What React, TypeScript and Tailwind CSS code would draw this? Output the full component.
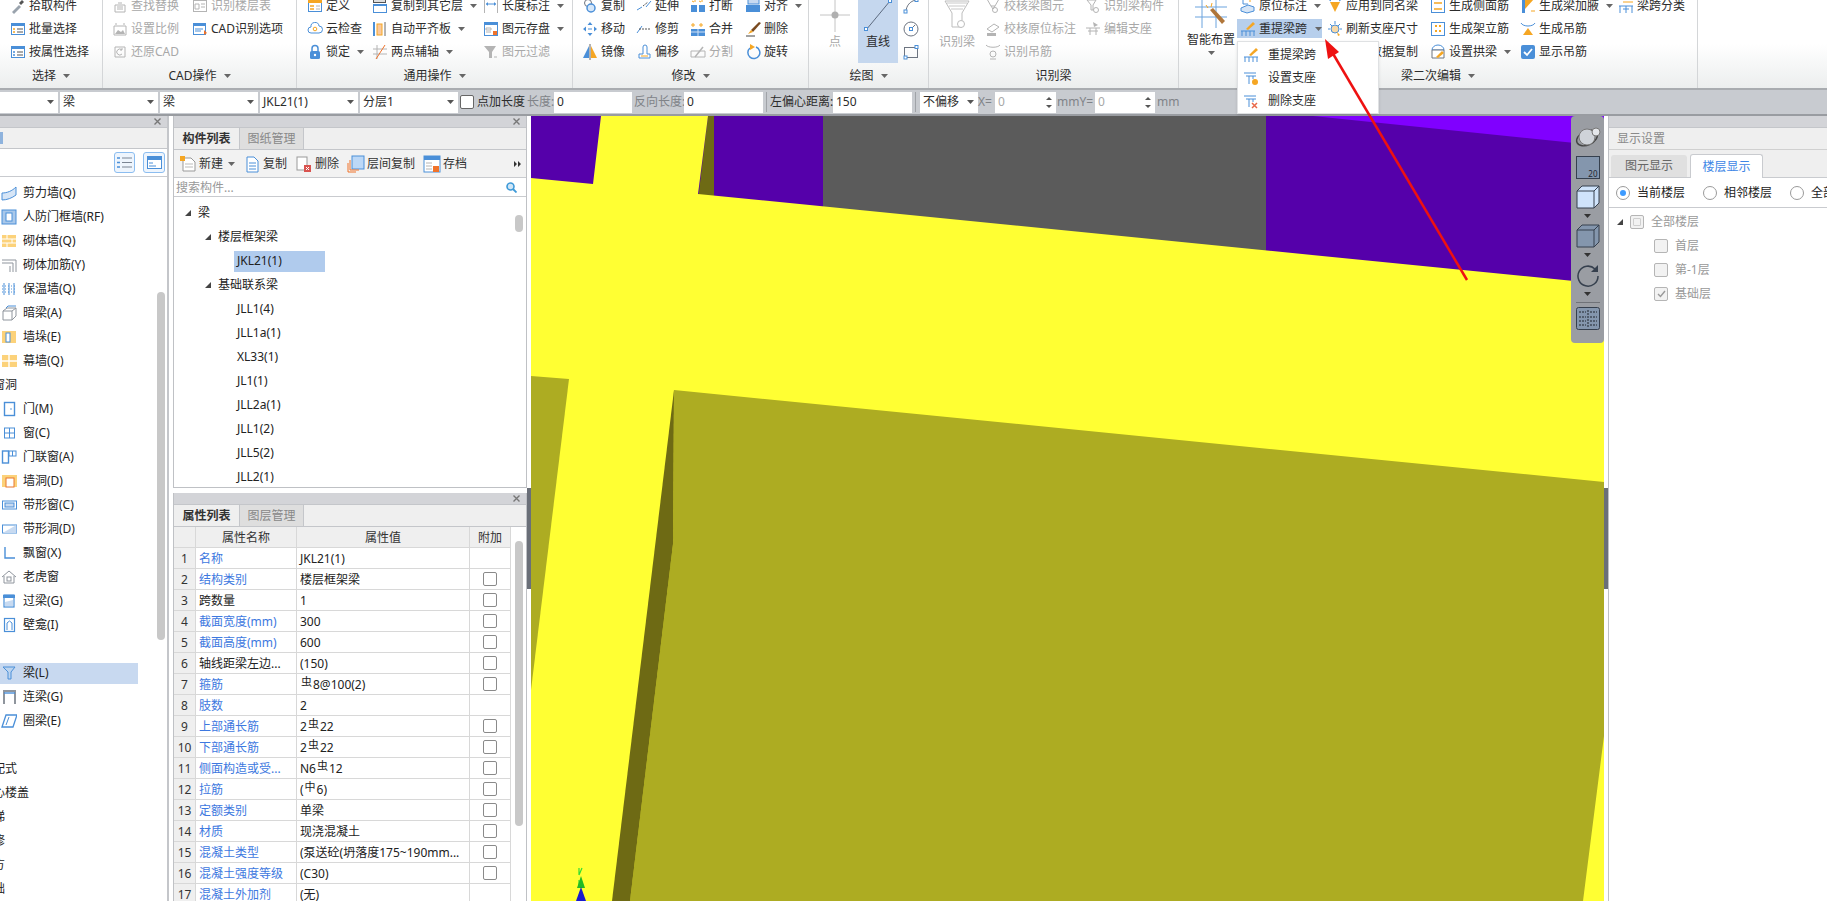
import React from "react";

const B = "#4a8fd8";
const O = "#f5a623";
const G = "#b4b4b4";
const D = "#6d7480";

const Ic = ({ children, w = 16, h = 16 }: { children: React.ReactNode; w?: number; h?: number }) => (
  <svg width={w} height={h} viewBox={`0 0 ${w} ${h}`} fill="none" className="shrink-0">
    {children}
  </svg>
);

const Caret = ({ c = "#666" }: { c?: string }) => (
  <svg width="7" height="4" viewBox="0 0 7 4" className="shrink-0">
    <path d="M0 0h7L3.5 4z" fill={c} />
  </svg>
);

// ribbon icons
const icons: Record<string, React.ReactNode> = {
  pick: <><path d="M2 14l7-7 2 2-7 7z" fill="#9aa3ad" /><path d="M9 5l3-3 2 2-3 3z" fill="#555" /></>,
  batch: <><rect x="1.5" y="2.5" width="13" height="11" stroke={B} fill="#fff" /><rect x="1" y="2" width="14" height="3" fill={B} /><path d="M3 8h2M3 11h2" stroke={O} strokeWidth="1.4" /><path d="M7 8h6M7 11h6" stroke="#555" /></>,
  attr: <><rect x="1.5" y="2.5" width="13" height="11" stroke={B} fill="#fff" /><rect x="1" y="2" width="14" height="3" fill={B} /><path d="M3 8h2M3 11h2" stroke={B} strokeWidth="1.4" /><path d="M7 8h6M7 11h6" stroke="#555" /></>,
  find: <><path d="M3 14V7h10v7zM5 9h6M5 11h6M6 5h4" stroke={G} /></>,
  scale: <><path d="M2 14V5h12v9z" stroke={G} /><path d="M3 13l3-4 3 2 2-2 2 4z" fill={G} /><path d="M4 2v2M12 2v2" stroke={G} /></>,
  restore: <><path d="M3 3h10v10H3z" stroke={G} /><path d="M10 6a3 3 0 1 0 0 4M10 4v2H8" stroke={G} /></>,
  table: <><rect x="1.5" y="2.5" width="13" height="11" stroke={G} /><path d="M3 6h4v5H3zM9 6h4M9 9h4" stroke={G} /></>,
  cad: <><rect x="1.5" y="2.5" width="12" height="11" stroke={B} fill="#fff" /><rect x="1" y="2" width="13" height="3" fill={B} /><path d="M3 8h8M3 10h6" stroke={B} /><path d="M12 9l3 3-3 2z" fill="#f0732a" /></>,
  define: <><rect x="1.5" y="2.5" width="13" height="11" stroke={B} fill="#fff" /><rect x="1" y="2" width="14" height="3" fill={O} /><path d="M3 8h4M3 11h4" stroke={O} strokeWidth="1.5" /><path d="M9 8h4M9 11h4" stroke={G} /></>,
  cloud: <><path d="M4 12a3 3 0 0 1 0-6 4 4 0 0 1 8-1 3.5 3.5 0 0 1 0 7z" stroke={B} fill="#fff" /><circle cx="8" cy="8" r="1.8" stroke={O} /></>,
  lock: <><rect x="3" y="7" width="10" height="8" rx="1.5" fill={B} /><path d="M5 7V4.5a3 3 0 0 1 6 0V7" stroke={B} strokeWidth="1.5" /><circle cx="8" cy="11" r="1.2" fill="#fff" /></>,
  copyL: <><rect x="1.5" y="1.5" width="12" height="3" stroke="#555" fill="#ddd" /><rect x="1.5" y="6.5" width="13" height="8" stroke={B} fill="#fff" /><rect x="1" y="6" width="14" height="2" fill={B} /></>,
  slab: <><path d="M2 1v14" stroke={B} strokeWidth="2" /><rect x="5" y="3" width="5" height="11" fill="#f9c9a0" stroke={O} /><path d="M13 1v14" stroke={G} strokeWidth="2" /></>,
  axis: <><path d="M1 5h14M1 10h14" stroke={G} /><path d="M5 1v14" stroke={G} /><path d="M4 15L13 1" stroke="#f0732a" /></>,
  dim: <><path d="M1.5 1v14M14.5 1v14" stroke={G} /><path d="M3 6h10" stroke={B} /><path d="M3 6l2-2v4zM13 6l-2-2v4z" fill={B} /></>,
  saveEl: <><rect x="1.5" y="1.5" width="13" height="13" stroke={B} fill="#fff" /><rect x="1" y="1" width="14" height="3" fill={B} /><path d="M3 7h5v2H3zM3 11h5" stroke={G} /><rect x="10" y="10" width="4" height="4" fill="#f0732a" /></>,
  filter: <><path d="M1 2h12L9 8v6H6V8z" fill={G} /><path d="M11 13h3" stroke={G} /></>,
  copy: <><circle cx="6" cy="5" r="3.5" stroke={D} /><circle cx="9" cy="10" r="4" stroke={B} strokeWidth="1.5" fill="#d5e6f8" /></>,
  move: <><path d="M8 1l2.5 3h-5zM8 15l2.5-3h-5zM1 8l3-2.5v5zM15 8l-3-2.5v5z" fill={B} /><path d="M6 8h4" stroke={B} /></>,
  mirror: <><path d="M1 14L7 2v12z" fill={B} /><path d="M15 14L9 2v12z" fill={O} /><path d="M8 0v16" stroke="#666" /></>,
  extend: <><path d="M1 12l5-3" stroke={B} /><path d="M7 8l5-4" stroke="#555" strokeDasharray="2 1" /><path d="M10 9l5-6" stroke={B} /></>,
  trim: <><path d="M1 12l5-7" stroke={B} /><path d="M3 8h11" stroke="#555" strokeDasharray="2 1" /></>,
  offset: <><path d="M3 14h11v-4h-3V3a2 2 0 0 0-4 0v7H3z" stroke={B} fill="#fff" /><path d="M5 12h7" stroke={O} /></>,
  break: <><path d="M2 3l2 1M5 1v3M9 3l2 1M12 1v3" stroke={O} /><rect x="1" y="7" width="6" height="7" fill={B} /><rect x="9" y="7" width="6" height="7" fill={B} /></>,
  merge: <><path d="M3 2v4M1 4h4M11 2v4M9 4h4" stroke={O} /><rect x="1" y="8" width="14" height="7" fill={B} /><path d="M8 8v7M1 11h14" stroke="#cfe0f5" /></>,
  split: <><path d="M1 13V7h14v6z" stroke={G} /><path d="M5 13l8-10" stroke={G} strokeWidth="1.5" /></>,
  alignT: <><rect x="3" y="1" width="11" height="5" fill="#c7daf1" stroke={B} /><rect x="1" y="7" width="14" height="7" fill={B} /></>,
  erase: <><path d="M14 1L6 9l2 2 8-9z" fill="#7a4a20" /><path d="M6 9l-3 4 5-2z" fill={O} /><path d="M1 15h9" stroke="#444" /></>,
  rotate: <><path d="M5 4a6 6 0 1 0 6-1" stroke={B} strokeWidth="1.5" /><path d="M5 0l5 3-5 3z" fill={O} /></>,
  arc: <><path d="M3 14C3 8 7 3 13 2" stroke={D} /><rect x="1" y="12" width="3" height="3" fill="#fff" stroke={B} /><rect x="12" y="0.5" width="3" height="3" fill="#fff" stroke={B} /></>,
  circle: <><circle cx="8" cy="8" r="7" stroke={D} /><path d="M8 8l4-4" stroke={D} /><rect x="6.5" y="6.5" width="3" height="3" fill="#fff" stroke={B} /></>,
  rect: <><rect x="1.5" y="3.5" width="13" height="10" stroke={D} /><rect x="12" y="1.5" width="3" height="3" fill="#fff" stroke={B} /><rect x="1" y="12" width="3" height="3" fill="#fff" stroke={B} /></>,
  chk1: <><path d="M2 1l4 7h4l4-7M6 8l2 3 2-3" stroke={G} /><circle cx="10" cy="12" r="2.5" stroke={G} /></>,
  chk2: <><path d="M2 8l7-5 5 3-7 5z" stroke={G} /><path d="M2 12h9v3H2z" fill={G} /></>,
  hang: <><path d="M1 1c2 3 12 3 14 0" stroke={G} /><circle cx="8" cy="10" r="3" stroke={G} /><path d="M5 15h6" stroke={G} /></>,
  chk3: <><path d="M2 2h9L8 7v5H6V7z" stroke={G} /><circle cx="11" cy="12" r="2.5" stroke={G} /></>,
  support: <><path d="M1 7h14M3 10h10M5 7v7M11 7v7" stroke={G} /><path d="M8 1l5 3-4 2z" fill={G} /></>,
  orig: <><path d="M3 6V1M3 6h5" stroke={B} /><path d="M1 10l7-3 6 2v4l-7 2-6-2z" fill="#d6e5f6" stroke={B} /><path d="M10 1v3" stroke={O} /></>,
  same: <><path d="M1 1l3 2M15 1l-3 2" stroke={B} /><path d="M3 4h10L8 14z" fill={O} /></>,
  sideBar: <><rect x="1.5" y="1.5" width="13" height="13" stroke={B} /><path d="M4 5h8M4 11h8" stroke={O} strokeWidth="1.4" /></>,
  haunch: <><path d="M2 1v14h3V1z" fill={B} /><path d="M5 1h9L5 11z" fill={O} /><path d="M11 13h4" stroke={O} /></>,
  classify: <><path d="M5 1h10M5 4h10" stroke={O} /><path d="M1 8h14M2 8v7M8 8v7M14 8v7M5 11h6" stroke={B} /></>,
  reSpan: <><path d="M6 8l7-7 2 2-7 6z" fill={O} /><path d="M1 10h14M2 10v5M6 10v5M10 10v5M14 10v5" stroke={B} /></>,
  refresh: <><circle cx="8" cy="8" r="4" fill="#f8d9a8" stroke={B} /><path d="M8 0v3M1 8h2M13 8h2M3 3l2 2M13 3l-2 2" stroke={B} /><path d="M10 11l3 3-2 1z" fill={O} /></>,
  stand: <><rect x="1.5" y="1.5" width="13" height="13" stroke={B} /><path d="M5 5h2M9 5h2M5 10h2M9 10h2" stroke={O} strokeWidth="2" /></>,
  hangOn: <><path d="M1 2c2 4 12 4 14 0" stroke={B} /><path d="M3 14h10L8 7z" fill={O} /></>,
  arch: <><path d="M2 6a6 5 0 0 1 12 0z" stroke={B} fill="#fff" /><path d="M2 6h12v8H2z" stroke={D} fill="#fff" /><path d="M6 13l6-6 2 2-6 5z" fill={O} /></>,
  show: <><rect x="1" y="1" width="14" height="14" rx="2" fill={B} /><path d="M4 8l3 3 5-6" stroke="#fff" strokeWidth="1.8" /></>,
  setSup: <><path d="M1 3h12M3 6h10M6 6v8M10 6v3" stroke={B} /><circle cx="12" cy="12" r="3" fill={O} /></>,
  delSup: <><path d="M1 3h12M3 6h10M6 6v8M10 6v3" stroke={B} /><path d="M9 10l5 5M14 10l-5 5" stroke="#e8694a" strokeWidth="1.5" /></>,
  blank: null,
};

const Item = ({ icon, text, off, caret }: { icon: string; text: string; off?: boolean; caret?: boolean }) => (
  <div className={`flex items-center h-[23px] gap-[3px] ${off ? "text-[#a8a8a8]" : "text-[#2c2c2c]"}`}>
    <Ic>{icons[icon]}</Ic>
    <span className="whitespace-nowrap">{text}</span>
    {caret && <span className="ml-[4px]"><Caret /></span>}
  </div>
);

type Cell = [string, string, boolean?, boolean?];

const Col = ({ items, w }: { items: Cell[]; w: string }) => (
  <div className={`flex flex-col shrink-0 ${w}`}>
    {items.map(([i, t, off, caret]) => (
      <Item key={t} icon={i} text={t} off={off} caret={caret} />
    ))}
  </div>
);

const Group = ({ w, label, caret = true, pl, children }: { w: string; label: string; caret?: boolean; pl: string; children: React.ReactNode }) => (
  <div className={`flex flex-col h-[88px] border-r border-[#d4d6d8] shrink-0 ${w}`}>
    <div className={`flex h-[64px] ${pl}`}>
      <div className="flex -mt-[6px]">{children}</div>
    </div>
    <div className="flex flex-1 items-center justify-center gap-[7px] pb-[1px] text-[#2c2c2c]">
      <span>{label}</span>
      {caret && <Caret />}
    </div>
  </div>
);

const Ribbon = () => (
  <div className="relative z-10 flex h-[88px] bg-gradient-to-b from-white via-white to-[#eceeee]">
    <Group w="w-[103px]" label="选择" pl="pl-[10px]">
      <Col w="w-[90px]" items={[["pick", "拾取构件"], ["batch", "批量选择"], ["attr", "按属性选择"]]} />
    </Group>
    <Group w="w-[194px]" label="CAD操作" pl="pl-[9px]">
      <Col w="w-[80px]" items={[["find", "查找替换", true], ["scale", "设置比例", true], ["restore", "还原CAD", true]]} />
      <Col w="w-[100px]" items={[["table", "识别楼层表", true], ["cad", "CAD识别选项"]]} />
    </Group>
    <Group w="w-[276px]" label="通用操作" pl="pl-[10px]">
      <Col w="w-[65px]" items={[["define", "定义"], ["cloud", "云检查"], ["lock", "锁定", false, true]]} />
      <Col w="w-[111px]" items={[["copyL", "复制到其它层", false, true], ["slab", "自动平齐板", false, true], ["axis", "两点辅轴", false, true]]} />
      <Col w="w-[90px]" items={[["dim", "长度标注", false, true], ["saveEl", "图元存盘", false, true], ["filter", "图元过滤", true]]} />
    </Group>
    <Group w="w-[236px]" label="修改" pl="pl-[9px]">
      <Col w="w-[54px]" items={[["copy", "复制"], ["move", "移动"], ["mirror", "镜像"]]} />
      <Col w="w-[54px]" items={[["extend", "延伸"], ["trim", "修剪"], ["offset", "偏移"]]} />
      <Col w="w-[55px]" items={[["break", "打断"], ["merge", "合并"], ["split", "分割", true]]} />
      <Col w="w-[60px]" items={[["alignT", "对齐", false, true], ["erase", "删除"], ["rotate", "旋转"]]} />
    </Group>
    <Group w="w-[120px]" label="绘图" pl="pl-[11px]">
      <div className="flex flex-col items-center w-[30px] mr-[8px] pt-[6px] text-[#a8a8a8]">
        <svg width="30" height="32" viewBox="0 0 30 32" className="shrink-0">
          <path d="M0 15h30M15 0v32" stroke="#c4c4c4" />
          <circle cx="15" cy="15" r="3.5" fill="#b0b0b0" />
        </svg>
        <span className="mt-[4px]">点</span>
      </div>
      <div className="flex flex-col items-center w-[40px] h-[69px] pt-[6px] bg-[#c5d7ee] text-[#2c2c2c]">
        <svg width="28" height="32" viewBox="0 0 28 32" className="shrink-0">
          <path d="M2 30L26 1" stroke="#5d6b80" />
          <rect x="0.5" y="27.5" width="3" height="3" fill="#fff" stroke={B} />
          <rect x="24.5" y="-0.5" width="3" height="3" fill="#fff" stroke={B} />
        </svg>
        <span className="mt-[4px]">直线</span>
      </div>
      <div className="flex flex-col ml-[5px]">
        {["arc", "circle", "rect"].map((n) => (
          <div key={n} className="flex items-center h-[23px]"><Ic>{icons[n]}</Ic></div>
        ))}
      </div>
    </Group>
    <Group w="w-[250px]" label="识别梁" caret={false} pl="pl-[9px]">
      <div className="flex flex-col items-center w-[38px] mr-[9px] pt-[6px] text-[#a8a8a8]">
        <svg width="26" height="30" viewBox="0 0 26 30" className="shrink-0">
          <path d="M1 1h24l-7 12v14H8V13z" stroke="#bdbdbd" fill="#fff" />
          <path d="M3 3h20M5 6h16M7 9h12" stroke="#c8c8c8" />
          <circle cx="17" cy="24" r="3.5" fill="#fff" stroke="#bdbdbd" />
        </svg>
        <span className="mt-[6px]">识别梁</span>
      </div>
      <Col w="w-[100px]" items={[["chk1", "校核梁图元", true], ["chk2", "校核原位标注", true], ["hang", "识别吊筋", true]]} />
      <Col w="w-[90px]" items={[["chk3", "识别梁构件", true], ["support", "编辑支座", true]]} />
    </Group>
    <Group w="w-[519px]" label="梁二次编辑" pl="pl-[12px]">
      <div className="flex flex-col items-center w-[40px] mr-[9px] pt-[6px] text-[#2c2c2c]">
        <svg width="34" height="30" viewBox="0 0 34 30" className="shrink-0">
          <path d="M1 7h32M1 17h32M8 0v28M22 0v28" stroke="#6aa3de" />
          <path d="M16 10l12 14 3-3L19 8z" fill="#b0763a" />
          <path d="M12 5l2 3M18 3l-1 4" stroke={O} />
        </svg>
        <span className="mt-[4px] whitespace-nowrap">智能布置</span>
        <span className="mt-[5px]"><Caret /></span>
      </div>
      <div className="flex flex-col w-[87px] shrink-0">
        <Item icon="orig" text="原位标注" caret />
        <div className="relative -ml-[3px] flex items-center gap-[3px] h-[19px] my-[2px] pl-[3px] bg-[#b7cfec] text-[#2c2c2c] w-[85px]">
          <Ic>{icons.reSpan}</Ic>
          <span className="whitespace-nowrap">重提梁跨</span>
          <span className="ml-[5px]"><Caret /></span>
          {/* dropdown */}
          <div className="absolute left-0 top-[22px] w-[142px] h-[73px] bg-white border border-[#dfe1e3] shadow-sm pt-[1px]">
            {[["reSpan", "重提梁跨"], ["setSup", "设置支座"], ["delSup", "删除支座"]].map(([i, t]) => (
              <div key={t} className="flex items-center gap-[9px] h-[23px] pl-[5px] text-[#2c2c2c]">
                <Ic>{icons[i]}</Ic>
                <span>{t}</span>
              </div>
            ))}
          </div>
        </div>
      </div>
      <Col w="w-[103px]" items={[["same", "应用到同名梁"], ["refresh", "刷新支座尺寸"], ["blank", "梁跨数据复制"]]} />
      <Col w="w-[90px]" items={[["sideBar", "生成侧面筋"], ["stand", "生成架立筋"], ["arch", "设置拱梁", false, true]]} />
      <Col w="w-[98px]" items={[["haunch", "生成梁加腋", false, true], ["hangOn", "生成吊筋"], ["show", "显示吊筋"]]} />
      <Col w="w-[90px]" items={[["classify", "梁跨分类"]]} />
    </Group>
  </div>
);

const Field = ({ w, text, sel }: { w: string; text: string; sel?: boolean }) => (
  <div className={`flex items-center justify-between h-[21px] bg-white px-[3px] shrink-0 text-[#2c2c2c] ${w}`}>
    <span>{text}</span>
    {sel && <span className="mr-[1px]"><Caret c="#555" /></span>}
  </div>
);

const Spin = ({ w }: { w: string }) => (
  <div className={`flex items-center justify-between h-[21px] bg-white pl-[3px] pr-[4px] shrink-0 text-[#a8a8a8] ${w}`}>
    <span>0</span>
    <div className="flex flex-col gap-[5px]">
      <svg width="6" height="3" viewBox="0 0 6 3"><path d="M0 3h6L3 0z" fill="#555" /></svg>
      <svg width="6" height="3" viewBox="0 0 6 3"><path d="M0 0h6L3 3z" fill="#555" /></svg>
    </div>
  </div>
);

const OptionBar = () => (
  <div className="flex items-center h-[28px] bg-[#c8cbd0] border-t-2 border-t-[#a9acb0] border-b-2 border-b-[#999ca1]">
    <Field w="w-[58px]" text="" sel />
    <Field w="w-[98px] ml-[2px]" text="梁" sel />
    <Field w="w-[98px] ml-[2px]" text="梁" sel />
    <Field w="w-[98px] ml-[2px]" text="JKL21(1)" sel />
    <Field w="w-[98px] ml-[2px]" text="分层1" sel />
    <span className="ml-[2px] w-[14px] h-[14px] rounded-[2px] bg-white border border-[#666] shrink-0" />
    <span className="ml-[3px] w-[50px] shrink-0 text-[#2c2c2c] whitespace-nowrap">点加长度</span>
    <span className="w-[27px] shrink-0 text-[#808388] whitespace-nowrap">长度:</span>
    <Field w="w-[78px]" text="0" />
    <span className="ml-[2px] w-[50px] shrink-0 text-[#808388] whitespace-nowrap">反向长度:</span>
    <Field w="w-[79px]" text="0" />
    <span className="ml-[3px] w-px h-[20px] bg-[#a0a3a8] shrink-0" />
    <span className="ml-[3px] w-[63px] shrink-0 text-[#2c2c2c] whitespace-nowrap">左偏心距离:</span>
    <Field w="w-[79px]" text="150" />
    <span className="ml-[3px] w-px h-[20px] bg-[#a0a3a8] shrink-0" />
    <Field w="w-[58px] ml-[4px]" text="不偏移" sel />
    <span className="w-[17px] shrink-0 text-[#808388]">X=</span>
    <Spin w="w-[61px]" />
    <span className="ml-[1px] w-[38px] shrink-0 text-[#808388] whitespace-nowrap">mmY=</span>
    <Spin w="w-[60px]" />
    <span className="ml-[2px] text-[#808388]">mm</span>
  </div>
);

const Close = () => (
  <svg width="7" height="7" viewBox="0 0 7 7">
    <path d="M0.5 0.5l6 6M6.5 0.5l-6 6" stroke="#777" strokeWidth="1.4" />
  </svg>
);

const PanelHead = () => (
  <div className="flex items-center justify-end h-[12px] pr-[6px] bg-[#d3d4d8] border-b border-[#c4c6ca] shrink-0">
    <Close />
  </div>
);

const Tabs = ({ a, b }: { a: string; b: string }) => (
  <div className="flex h-[22px] bg-[#efefef] border-b border-[#c4c6ca] shrink-0">
    <div className="flex items-center justify-center w-[65px] font-bold text-[#333]">{a}</div>
    <div className="flex items-center justify-center w-[65px] bg-[#dedede] border-l border-r border-[#c4c6ca] text-[#888]">{b}</div>
  </div>
);

// left tree icons
const treeIcon: Record<string, React.ReactNode> = {
  wall: <><path d="M1 8c5 0 10-2 14-6v8c-4 3-9 5-14 5z" fill="#d6e5f6" stroke={B} /></>,
  frame: <><rect x="1" y="1" width="14" height="14" fill="#a9c8ea" stroke={B} /><rect x="5" y="4" width="6" height="8" fill="#fff" stroke={B} /></>,
  brick: <><rect x="1" y="2" width="14" height="12" fill="#fcd27a" /><path d="M1 6h14M1 10h14M6 2v4M11 6v4M6 10v4" stroke="#fff" /></>,
  rebar: <><path d="M1 3h14v12M1 6h11v9M9 9v6" stroke="#8f959d" /></>,
  insul: <><path d="M3 2v12M8 2v12M13 2v12" stroke={B} /><path d="M1 5h14M1 8h14M1 11h14" stroke={B} strokeDasharray="1 2" /></>,
  darkB: <><path d="M2 6h9v9H2zM2 6l4-3h9l-4 3M11 15l4-4V3" stroke="#8f959d" /><path d="M5 3l2-2h8" stroke={B} /></>,
  pier: <><rect x="1" y="2" width="14" height="12" fill="#fcd27a" /><rect x="5" y="4" width="4" height="9" fill="#fff" stroke={B} /></>,
  curtain: <><rect x="1" y="2" width="15" height="12" fill="#fcd27a" /><path d="M1 8h15M8 2v12" stroke="#fff" strokeWidth="1.4" /></>,
  door: <><rect x="3.5" y="1.5" width="10" height="13" stroke={B} strokeWidth="1.4" /><circle cx="10" cy="8" r="0.8" fill={B} /></>,
  window: <><rect x="3.5" y="3" width="10" height="10" stroke={B} /><path d="M8.5 3v10M3.5 8h10" stroke={B} /></>,
  doorWin: <><rect x="1.5" y="2" width="6" height="12" stroke={B} strokeWidth="1.4" /><rect x="8" y="2" width="7" height="5" stroke={B} /><path d="M11.5 2v5" stroke={B} /></>,
  opening: <><rect x="1" y="2" width="15" height="12" fill="#fcd27a" /><rect x="5" y="5" width="8" height="9" fill="#fff" stroke="#e8762c" /></>,
  strip: <><rect x="1.5" y="4" width="14" height="8" stroke={B} /><rect x="4" y="6" width="9" height="4" fill="#c7daf1" stroke={B} /></>,
  stripO: <><rect x="1.5" y="4" width="14" height="8" stroke={B} /><path d="M1.5 12L15.5 4v8z" fill="#c7daf1" /></>,
  bay: <><path d="M4 2v11h10" stroke={B} strokeWidth="1.4" /></>,
  dormer: <><path d="M1 8l7-6 7 6M3 7v7h10V7" stroke="#8f959d" /><rect x="6" y="8" width="4" height="4" stroke="#8f959d" /></>,
  lintel: <><rect x="3" y="2" width="10" height="12" stroke={B} strokeWidth="1.2" /><rect x="2" y="2" width="12" height="3" fill={B} /><path d="M4 13V9l8-2v6z" fill="#c7daf1" /></>,
  niche: <><rect x="3.5" y="1.5" width="10" height="13" stroke={B} strokeWidth="1.2" /><path d="M6 13V6l2.5-2L11 6v7" stroke={B} /></>,
  beam: <><path d="M2 2h12l-4 5v7H7V7z" fill="#bcd4ef" stroke={B} /></>,
  coupling: <><path d="M3 15V2h11v13" stroke="#8f959d" strokeWidth="2" /><path d="M3 4h11" stroke={B} strokeWidth="1.4" /></>,
  ring: <><path d="M1 14L5 2h11l-4 12z" stroke={B} strokeWidth="1.3" /><path d="M5 12l3-8" stroke={B} /></>,
};

const leftRows: ([string, string] | [null, string] | null)[] = [
  ["wall", "剪力墙(Q)"], ["frame", "人防门框墙(RF)"], ["brick", "砌体墙(Q)"], ["rebar", "砌体加筋(Y)"], ["insul", "保温墙(Q)"],
  ["darkB", "暗梁(A)"], ["pier", "墙垛(E)"], ["curtain", "幕墙(Q)"], [null, "门窗洞"], ["door", "门(M)"], ["window", "窗(C)"],
  ["doorWin", "门联窗(A)"], ["opening", "墙洞(D)"], ["strip", "带形窗(C)"], ["stripO", "带形洞(D)"], ["bay", "飘窗(X)"],
  ["dormer", "老虎窗"], ["lintel", "过梁(G)"], ["niche", "壁龛(I)"], null, ["beam", "梁(L)"], ["coupling", "连梁(G)"],
  ["ring", "圈梁(E)"], null, [null, "装配式"], [null, "空心楼盖"], [null, "楼梯"], [null, "装修"], [null, "土方"], [null, "基础"],
];

const LeftPanel = () => (
  <div className="relative flex flex-col w-[169px] shrink-0 overflow-hidden border-r-2 border-[#c4c6ca] bg-white">
    <PanelHead />
    <div className="flex items-center h-[21px] bg-[#f0f0f0] border-b border-[#c4c6ca] shrink-0">
      <span className="w-[3px] h-[12px] bg-[#8fb3dd]" />
    </div>
    <div className="flex items-center justify-end gap-[8px] h-[28px] pr-[2px] border-b border-[#c9cbcf] shrink-0">
      <div className="flex items-center justify-center w-[21px] h-[21px] rounded-[3px] bg-[#eef5fd] border border-[#8cbdf0]">
        <svg width="15" height="13" viewBox="0 0 15 13"><path d="M0 2h3M0 6.5h3M0 11h3" stroke={B} strokeWidth="1.4" /><path d="M5 2h10M5 6.5h10M5 11h10" stroke="#7a8594" /></svg>
      </div>
      <div className="flex items-center justify-center w-[22px] h-[21px] rounded-[3px] bg-[#eef5fd] border border-[#8cbdf0]">
        <svg width="15" height="13" viewBox="0 0 15 13"><rect x="0.5" y="0.5" width="14" height="12" stroke={B} fill="#fff" /><rect width="15" height="4" fill={B} /><path d="M2 7h4M2 10h7" stroke={B} /></svg>
      </div>
    </div>
    <div className="flex flex-col pt-[4px]">
      {leftRows.map((r, i) => (
        <div key={i} className={`flex items-center h-[24px] shrink-0 ${r && r[1] === "梁(L)" ? "relative" : ""}`}>
          {r && r[1] === "梁(L)" && <span className="absolute left-0 top-[2px] w-[138px] h-[21px] bg-[#c8d9f0]" />}
          {r && r[0] && (
            <>
              <span className="relative flex w-[23px] pl-[1px]"><Ic>{treeIcon[r[0]]}</Ic></span>
              <span className="relative text-[#222] whitespace-nowrap">{r[1]}</span>
            </>
          )}
          {r && !r[0] && <span className="-ml-[19px] text-[#222] whitespace-nowrap">{r[1]}</span>}
        </div>
      ))}
    </div>
    <span className="absolute left-[157px] top-[176px] w-[8px] h-[348px] rounded-[4px] bg-[#c8c8c8]" />
  </div>
);

const Tool = ({ icon, text, caret, ml }: { icon: React.ReactNode; text: string; caret?: boolean; ml: string }) => (
  <div className={`flex items-center gap-[2px] text-[#333] ${ml}`}>
    <Ic w={18} h={18}>{icon}</Ic>
    <span>{text}</span>
    {caret && <span className="ml-[3px]"><Caret /></span>}
  </div>
);

const Tri = () => (
  <svg width="6" height="6" viewBox="0 0 6 6" className="shrink-0"><path d="M6 0v6H0z" fill="#444" /></svg>
);

const treeRows = ["JLL1(4)", "JLL1a(1)", "XL33(1)", "JL1(1)", "JLL2a(1)", "JLL1(2)", "JLL5(2)", "JLL2(1)"];

const ListPanel = () => (
  <div className="relative flex flex-col h-[372px] border-l border-r border-b border-[#bfc1c5] overflow-hidden shrink-0">
    <PanelHead />
    <Tabs a="构件列表" b="图纸管理" />
    <div className="relative flex items-center h-[28px] bg-[#f2f2f2] border-b border-[#c9cbcf] shrink-0 pl-[5px]">
      <Tool ml="" caret text="新建" icon={<><path d="M4 3h8l4 4v9H4z" fill="#fff" stroke="#999" /><path d="M6 9h8M6 12h8" stroke="#bbb" /><rect x="1" y="1" width="5" height="5" fill={O} /></>} />
      <Tool ml="ml-[8px]" text="复制" icon={<><path d="M4 2h7l4 4v11H4z" fill="#fff" stroke={B} /><path d="M6 8h7M6 11h7M6 14h7" stroke={B} /></>} />
      <Tool ml="ml-[8px]" text="删除" icon={<><rect x="2" y="2" width="10" height="13" fill="#fff" stroke="#999" /><rect x="9" y="10" width="7" height="7" fill="#d9534f" /><path d="M11 12l3 3M14 12l-3 3" stroke="#fff" /></>} />
      <Tool ml="ml-[8px]" text="层间复制" icon={<><rect x="5" y="1" width="12" height="13" fill="#bcd8f7" stroke={B} /><path d="M3 5v10h9M1 8v9h8" stroke="#f0732a" /></>} />
      <Tool ml="ml-[8px]" text="存档" icon={<><rect x="1" y="1" width="16" height="16" fill="#fff" stroke={B} /><rect x="1" y="1" width="16" height="4" fill={B} /><path d="M3 8h6M3 11h6M3 14h6" stroke={G} /><rect x="10" y="11" width="6" height="6" fill="#f0732a" /></>} />
      <svg className="absolute right-[4px] top-[11px]" width="8" height="6" viewBox="0 0 8 6"><path d="M0 0l3 3-3 3zM4 0l3 3-3 3z" fill="#333" /></svg>
    </div>
    <div className="flex items-center justify-between h-[19px] pt-[1px] bg-white border-b border-[#c9cbcf] shrink-0 pl-[2px] pr-[9px] text-[#999]">
      <span>搜索构件...</span>
      <svg width="11" height="11" viewBox="0 0 11 11"><circle cx="4.5" cy="4.5" r="3.5" stroke="#3e9ad8" strokeWidth="1.6" fill="#cfe6f7" /><path d="M7 7l3.5 3.5" stroke="#3e9ad8" strokeWidth="1.8" /></svg>
    </div>
    <div className="flex flex-col pt-[4px] bg-white flex-1 text-[#222]">
      <div className="flex items-center h-[24px] pl-[11px] gap-[7px] shrink-0"><Tri /><span>梁</span></div>
      <div className="flex items-center h-[24px] pl-[31px] gap-[7px] shrink-0"><Tri /><span>楼层框架梁</span></div>
      <div className="flex items-center h-[24px] pl-[60px] shrink-0">
        <span className="flex items-center w-[91px] h-[21px] pl-[3px] bg-[#b0cbed]">JKL21(1)</span>
      </div>
      <div className="flex items-center h-[24px] pl-[31px] gap-[7px] shrink-0"><Tri /><span>基础联系梁</span></div>
      {treeRows.map((t) => (
        <div key={t} className="flex items-center h-[24px] pl-[63px] shrink-0">{t}</div>
      ))}
    </div>
    <span className="absolute right-[3px] top-[99px] w-[8px] h-[17px] rounded-[4px] bg-[#c8c8c8]" />
  </div>
);

type PropRow = [string, boolean, React.ReactNode, boolean];

const Sym = ({ c }: { c: string }) => <span className="inline-block mx-[1px] text-[11px] -translate-y-[3px]">{c}</span>;

const props: PropRow[] = [
  ["名称", true, "JKL21(1)", false],
  ["结构类别", true, "楼层框架梁", true],
  ["跨数量", false, "1", true],
  ["截面宽度(mm)", true, "300", true],
  ["截面高度(mm)", true, "600", true],
  ["轴线距梁左边...", false, "(150)", true],
  ["箍筋", true, <><Sym c="虫" />8@100(2)</>, true],
  ["肢数", true, "2", false],
  ["上部通长筋", true, <>2<Sym c="虫" />22</>, true],
  ["下部通长筋", true, <>2<Sym c="虫" />22</>, true],
  ["侧面构造或受...", true, <>N6<Sym c="虫" />12</>, true],
  ["拉筋", true, <>(<Sym c="中" />6)</>, true],
  ["定额类别", true, "单梁", true],
  ["材质", true, "现浇混凝土", true],
  ["混凝土类型", true, "(泵送砼(坍落度175~190mm...", true],
  ["混凝土强度等级", true, "(C30)", true],
  ["混凝土外加剂", true, "(无)", false],
];

const PropPanel = () => (
  <div className="relative flex flex-col mt-[5px] flex-1 border-l border-r border-[#bfc1c5] overflow-hidden">
    <PanelHead />
    <Tabs a="属性列表" b="图层管理" />
    <div className="flex h-[21px] shrink-0 text-[#333]">
      <div className="w-[22px] bg-[#efefef] border-r border-b border-[#d8d8d8]" />
      <div className="flex items-center justify-center w-[101px] pt-[2px] bg-[#efefef] border-r border-b border-[#d8d8d8]">属性名称</div>
      <div className="flex items-center justify-center w-[173px] pt-[2px] bg-[#efefef] border-r border-b border-[#d8d8d8]">属性值</div>
      <div className="flex items-center justify-center w-[41px] pt-[2px] bg-[#efefef] border-r border-b border-[#d8d8d8]">附加</div>
    </div>
    {props.map(([name, blue, value, chk], i) => (
      <div key={i} className="flex h-[21px] shrink-0 text-[#222]">
        <div className="flex items-center justify-center w-[22px] pt-[1px] bg-[#efefef] border-r border-b border-[#d8d8d8] text-[#333]">{i + 1}</div>
        <div className={`flex items-center w-[101px] pl-[3px] pt-[1px] whitespace-nowrap border-r border-b border-[#d8d8d8] ${blue ? "text-[#3d78e0]" : ""}`}>{name}</div>
        <div className="flex items-center w-[173px] pl-[3px] pt-[1px] whitespace-nowrap overflow-hidden border-r border-b border-[#d8d8d8]">{value}</div>
        <div className="flex items-center justify-center w-[41px] border-r border-b border-[#d8d8d8]">
          {chk && <span className="w-[14px] h-[14px] rounded-[2px] border border-[#8a8a8a] bg-white" />}
        </div>
      </div>
    ))}
    <span className="absolute right-[3px] top-[48px] w-[8px] h-[285px] rounded-[4px] bg-[#c8c8c8]" />
  </div>
);

const Splitter = () => (
  <div className="flex items-start w-[4px] shrink-0 bg-white">
    <span className="mt-[372px] w-[4px] h-[101px] bg-[#6a6f78]" />
  </div>
);

const Scene = () => (
  <svg className="block w-full h-full" viewBox="531 116 1073 785" preserveAspectRatio="none">
    <rect x="531" y="116" width="1073" height="785" fill="#5500aa" />
    <path d="M823 116H1266V260H823z" fill="#5b5b5b" />
    <path d="M1313 116H1604V146z" fill="#8000ff" />
    <path d="M708 116H714V200H698z" fill="#6e6a14" />
    <path d="M531 178L593 184L601 116H708L698 194L1604 284V901H531z" fill="#ffff33" />
    <path d="M674 390L1604 482V736L1583 901H630L673 544z" fill="#adac22" />
    <path d="M674 390L673 544L630 901H612z" fill="#6e6a14" />
    <path d="M531 376L569 379L531 690z" fill="#adac22" />
    <path d="M579 868v7M582 868l-3 7M579 880v8" stroke="#33dd33" strokeWidth="1.2" />
    <path d="M581 876l4 12h-8z" fill="#22bb22" />
    <path d="M581 887l5 14h-10z" fill="#1a1acc" />
  </svg>
);

const NavCaret = ({ mt }: { mt: string }) => (
  <svg width="7" height="4" viewBox="0 0 7 4" className={`shrink-0 ${mt}`}><path d="M0 0h7L3.5 4z" fill="#333" /></svg>
);

const NavBar = () => (
  <div className="absolute right-0 top-0 flex flex-col items-center w-[33px] h-[227px] pt-[10px] bg-[#9a9da3] rounded-sm">
    <svg width="26" height="22" viewBox="0 0 26 22" className="shrink-0">
      <ellipse cx="12" cy="12" rx="11" ry="7" fill="none" stroke="#444" strokeWidth="1.4" transform="rotate(-25 12 12)" />
      <circle cx="12" cy="11" r="8" fill="#cfd3d9" stroke="#777" />
      <circle cx="21" cy="6" r="4" fill="#e4e6ea" stroke="#777" />
    </svg>
    <div className="relative w-[24px] h-[23px] mt-[8px] shrink-0 bg-[#8496ad] border border-[#36404e]">
      <span className="absolute right-[1px] bottom-0 text-[8px] leading-[9px] text-[#1e2630]">20</span>
    </div>
    <svg width="24" height="24" viewBox="0 0 24 24" className="mt-[6px] shrink-0">
      <path d="M1 6l5-5h17v17l-5 5H1z" fill="#cfe3fb" stroke="#36404e" />
      <path d="M1 6h17v17M18 6l5-5" stroke="#36404e" fill="none" />
    </svg>
    <NavCaret mt="mt-[5px]" />
    <svg width="24" height="24" viewBox="0 0 24 24" className="mt-[6px] shrink-0">
      <path d="M1 6l5-5h17v17l-5 5H1z" fill="#8496ad" stroke="#36404e" />
      <path d="M1 6h17v17M18 6l5-5" stroke="#36404e" fill="none" />
    </svg>
    <NavCaret mt="mt-[5px]" />
    <svg width="24" height="24" viewBox="0 0 24 24" className="mt-[6px] shrink-0">
      <path d="M19 6a10 10 0 1 0 3 7" fill="none" stroke="#36404e" strokeWidth="1.5" />
      <path d="M22 2v7h-7z" fill="#36404e" />
    </svg>
    <NavCaret mt="mt-[5px]" />
    <span className="mt-[6px] w-[24px] h-px bg-[#6f7278] shrink-0" />
    <svg width="24" height="23" viewBox="0 0 24 23" className="mt-[4px] shrink-0">
      <rect x="0.5" y="0.5" width="23" height="22" rx="2" fill="#8496ad" stroke="#36404e" />
      <path d="M12 3v18M3 5h7M14 5h7M3 10h7M14 10h7M3 14h7M14 14h7M3 18h7M14 18h7" stroke="#20262e" strokeDasharray="2 1" />
    </svg>
  </div>
);

const Radio = ({ on, text }: { on?: boolean; text: string }) => (
  <div className="flex items-center gap-[7px] w-[87px] shrink-0 text-[#222]">
    <span className="flex items-center justify-center w-[14px] h-[14px] rounded-full border border-[#9a9a9a] bg-white shrink-0">
      {on && <span className="w-[6px] h-[6px] rounded-full bg-[#3d9bff]" />}
    </span>
    <span className="whitespace-nowrap">{text}</span>
  </div>
);

const FloorCheck = ({ text, checked }: { text: string; checked?: boolean }) => (
  <div className="flex items-center h-[24px] pl-[45px] gap-[7px] text-[#999]">
    <span className="flex items-center justify-center w-[14px] h-[14px] rounded-[2px] border border-[#b5b5b5] bg-[#f2f2f2]">
      {checked && <svg width="9" height="8" viewBox="0 0 9 8"><path d="M1 4l2.5 2.5L8 1" stroke="#999" strokeWidth="1.4" fill="none" /></svg>}
    </span>
    <span>{text}</span>
  </div>
);

const RightPanel = () => (
  <div className="flex flex-col flex-1 overflow-hidden border-l border-[#bfc1c5] bg-white">
    <div className="h-[12px] bg-[#d3d4d8] border-b border-[#c4c6ca] shrink-0" />
    <div className="flex items-center h-[22px] pl-[8px] bg-[#efefef] border-b border-[#d0d0d0] text-[#8a8a8a] shrink-0">显示设置</div>
    <div className="flex items-end h-[28px] pl-[2px] gap-[3px] bg-[#efefef] border-b border-[#c9cbcf] shrink-0">
      <div className="flex items-center justify-center w-[76px] h-[22px] bg-[#e0e0e0] rounded-t-[3px] text-[#666]">图元显示</div>
      <div className="flex items-center justify-center w-[73px] h-[24px] -mb-px bg-white border border-b-0 border-[#c9cbcf] rounded-t-[3px] text-[#3d86e6]">楼层显示</div>
    </div>
    <div className="flex items-center h-[30px] pl-[7px] border-b border-[#c9cbcf] shrink-0">
      <Radio on text="当前楼层" />
      <Radio text="相邻楼层" />
      <Radio text="全部楼层" />
    </div>
    <div className="flex flex-col pt-[2px]">
      <div className="flex items-center h-[24px] pl-[8px] gap-[7px] text-[#999]">
        <Tri />
        <span className="flex items-center justify-center w-[14px] h-[14px] rounded-[2px] border border-[#b5b5b5] bg-[#f2f2f2]">
          <span className="w-[8px] h-[8px] rounded-[1px] border border-[#cfcfcf]" />
        </span>
        <span>全部楼层</span>
      </div>
      <FloorCheck text="首层" />
      <FloorCheck text="第-1层" />
      <FloorCheck text="基础层" checked />
    </div>
  </div>
);

export default function App() {
  return (
    <div className="relative w-[1827px] h-[901px] overflow-hidden bg-white font-['Noto_Sans','Noto_Sans_CJK_SC',sans-serif] text-[12px] leading-none">
      <Ribbon />
      <OptionBar />
      <div className="flex h-[785px]">
        <LeftPanel />
        <div className="w-[4px] shrink-0" />
        <div className="flex flex-col w-[354px] shrink-0">
          <ListPanel />
          <PropPanel />
        </div>
        <Splitter />
        <div className="relative w-[1073px] shrink-0">
          <Scene />
          <NavBar />
        </div>
        <Splitter />
        <RightPanel />
      </div>
      {/* red annotation arrow */}
      <svg className="absolute left-0 top-0 z-20 pointer-events-none" width="1827" height="901" viewBox="0 0 1827 901">
        <path d="M1332 52L1467 280" stroke="#ee1111" strokeWidth="2.5" />
        <path d="M1325 39L1339 52L1328 59z" fill="#ee1111" />
      </svg>
    </div>
  );
}
